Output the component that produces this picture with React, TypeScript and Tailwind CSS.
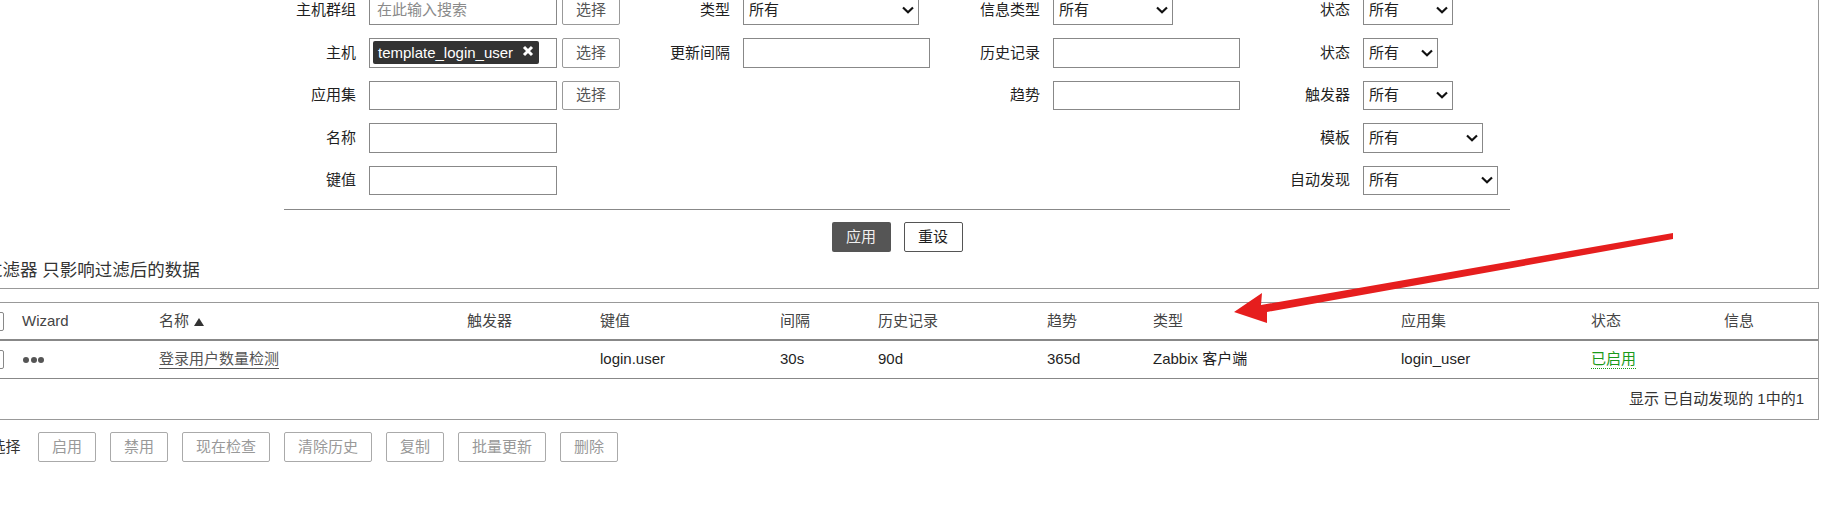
import type { ReactNode } from "react";

const font = "font-['Liberation_Sans','Arial','Noto_Sans_CJK_SC',sans-serif]";

function Field({ label, children }: { label: string; children: ReactNode }) {
  return (
    <div className="flex items-center gap-[13px] h-[29.5px]">
      <label className="w-[72px] shrink-0 text-right whitespace-nowrap">{label}</label>
      {children}
    </div>
  );
}

function TextBox({ w = "w-[187px]", children }: { w?: string; children?: ReactNode }) {
  return (
    <div className={`${w} h-full border border-[#888] bg-white flex items-center shrink-0`}>
      {children}
    </div>
  );
}

function SelectBox({ w }: { w: string }) {
  return (
    <div className={`${w} h-full border border-[#888] bg-white flex items-center justify-between pl-[5px] pr-[4px] shrink-0`}>
      <span>所有</span>
      <svg width="12" height="8" viewBox="0 0 12 8" fill="none" stroke="#111" strokeWidth="2.2">
        <path d="M1 1.5 6 6.2 11 1.5" />
      </svg>
    </div>
  );
}

function PickBtn() {
  return (
    <button className="w-[58px] h-full border border-[#999] rounded-[2px] bg-white text-[#555] shrink-0 -ml-[8px]">选择</button>
  );
}

const headers = [
  { t: "Wizard", w: "w-[137px]" },
  { t: "名称", w: "w-[308px]", sort: true },
  { t: "触发器", w: "w-[133px]" },
  { t: "键值", w: "w-[180px]" },
  { t: "间隔", w: "w-[98px]" },
  { t: "历史记录", w: "w-[169px]" },
  { t: "趋势", w: "w-[106px]" },
  { t: "类型", w: "w-[248px]" },
  { t: "应用集", w: "w-[190px]" },
  { t: "状态", w: "w-[133px]" },
  { t: "信息", w: "w-[60px]" },
];

const actions = ["启用", "禁用", "现在检查", "清除历史", "复制", "批量更新", "删除"];

export default function App() {
  return (
    <div className={`${font} w-[1826px] h-[521px] overflow-hidden bg-white text-[15px] text-[#1f1f1f] relative`}>
      {/* filter box */}
      <div className="w-[1819px] -mt-[4.5px] border-r border-b border-[#999] pb-[8px]">
        <div className="ml-[284px] w-[1226px] pb-[14px] border-b border-[#888] flex">
          <div className="w-[374px] flex flex-col gap-[13px]">
            <Field label="主机群组">
              <TextBox w="w-[188px]"><span className="pl-[7px] text-[#8a8a8a]">在此输入搜索</span></TextBox>
              <PickBtn />
            </Field>
            <Field label="主机">
              <TextBox w="w-[188px]">
                <span className="ml-[3px] h-[23px] w-[166px] bg-[#333] rounded-[2px] text-white flex items-center pl-[5px] gap-[9px] whitespace-nowrap">
                  template_login_user
                  <svg width="12" height="12" viewBox="0 0 12 12" stroke="#fff" strokeWidth="3" className="-mt-[3px]">
                    <path d="M2 2l8 8M10 2l-8 8" />
                  </svg>
                </span>
              </TextBox>
              <PickBtn />
            </Field>
            <Field label="应用集">
              <TextBox w="w-[188px]" />
              <PickBtn />
            </Field>
            <Field label="名称"><TextBox w="w-[188px]" /></Field>
            <Field label="键值"><TextBox w="w-[188px]" /></Field>
          </div>
          <div className="w-[310px] flex flex-col gap-[13px]">
            <Field label="类型"><SelectBox w="w-[176px]" /></Field>
            <Field label="更新间隔"><TextBox /></Field>
          </div>
          <div className="w-[310px] flex flex-col gap-[13px]">
            <Field label="信息类型"><SelectBox w="w-[120px]" /></Field>
            <Field label="历史记录"><TextBox /></Field>
            <Field label="趋势"><TextBox /></Field>
          </div>
          <div className="flex flex-col gap-[13px]">
            <Field label="状态"><SelectBox w="w-[90px]" /></Field>
            <Field label="状态"><SelectBox w="w-[75px]" /></Field>
            <Field label="触发器"><SelectBox w="w-[90px]" /></Field>
            <Field label="模板"><SelectBox w="w-[120px]" /></Field>
            <Field label="自动发现"><SelectBox w="w-[135px]" /></Field>
          </div>
        </div>
        <div className="ml-[284px] w-[1226px] flex justify-center gap-[13px] mt-[12px]">
          <button className="w-[59px] h-[30px] rounded-[2px] bg-[#555] text-[#f0f0f0]">应用</button>
          <button className="w-[59px] h-[30px] rounded-[2px] border border-[#555] bg-white">重设</button>
        </div>
        <div className="-ml-[15px] mt-[8px] text-[17.5px] leading-[20px] whitespace-nowrap text-[#333]">过滤器 只影响过滤后的数据</div>
      </div>

      {/* list */}
      <div className="w-[1819px] mt-[13px] border-r border-t border-b border-[#999]">
        <div className="h-[38px] border-b-[2px] border-[#888] flex items-center text-[#444]">
          <span className="w-[22px] shrink-0 flex">
            <span className="w-[16px] h-[19px] -ml-[12px] border border-[#888] rounded-[2px] bg-white" />
          </span>
          {headers.map((h) => (
            <span key={h.t} className={`${h.w} shrink-0 flex items-center gap-[5px] whitespace-nowrap`}>
              {h.t}
              {h.sort && (
                <svg width="10" height="8" viewBox="0 0 10 8" fill="#333" className="mt-[2px]"><path d="M5 0 10 8H0z" /></svg>
              )}
            </span>
          ))}
        </div>
        <div className="h-[38px] border-b border-[#888] pb-[1px] flex items-center">
          <span className="w-[22px] shrink-0 flex">
            <span className="w-[16px] h-[19px] -ml-[12px] border border-[#888] rounded-[2px] bg-white" />
          </span>
          <span className="w-[137px] shrink-0 flex gap-[1.5px] pl-[1px] pt-[1px]">
            <i className="size-[6px] rounded-full bg-[#555]" />
            <i className="size-[6px] rounded-full bg-[#555]" />
            <i className="size-[6px] rounded-full bg-[#555]" />
          </span>
          <span className="w-[308px] shrink-0 text-[#555]"><span className="border-b border-[#555] pb-[1px]">登录用户数量检测</span></span>
          <span className="w-[133px] shrink-0" />
          <span className="w-[180px] shrink-0">login.user</span>
          <span className="w-[98px] shrink-0">30s</span>
          <span className="w-[169px] shrink-0">90d</span>
          <span className="w-[106px] shrink-0">365d</span>
          <span className="w-[248px] shrink-0">Zabbix 客户端</span>
          <span className="w-[190px] shrink-0">login_user</span>
          <span className="w-[133px] shrink-0 text-[#1a9a1a]"><span className="border-b border-dotted border-[#1a9a1a] pb-[1px]">已启用</span></span>
        </div>
        <div className="h-[40px] flex items-center justify-end pr-[14px] text-[#333]">显示 已自动发现的 1中的1</div>
      </div>

      {/* mass actions */}
      <div className="flex items-center h-[30px] mt-[12px]">
        <span className="-ml-[22px] w-[42px] shrink-0 text-right text-[#333] whitespace-nowrap">0 选择</span>
        <div className="flex gap-[14px] ml-[18px]">
          {actions.map((a) => (
            <button key={a} className="h-[30px] px-[13px] border border-[#aaa] rounded-[2px] text-[#999] bg-white whitespace-nowrap">{a}</button>
          ))}
        </div>
      </div>

      {/* red arrow annotation */}
      <svg className="absolute left-0 top-0" width="1826" height="521" viewBox="0 0 1826 521" fill="#e61e1e">
        <path d="M1673 233 1673 239 1267 312 1267 323 1234 312 1262 293 1261 305z" />
      </svg>
    </div>
  );
}
